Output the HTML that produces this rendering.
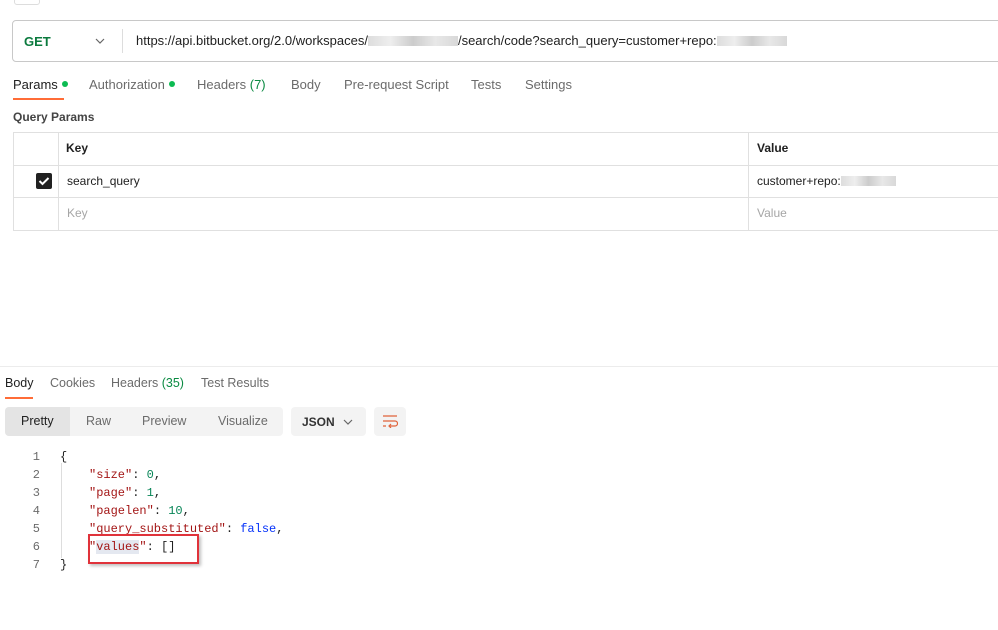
<!DOCTYPE html>
<html><head><style>
body{margin:0;width:998px;height:630px;background:#fff;font-family:"Liberation Sans",sans-serif;font-size:13px;color:#212121;position:relative;overflow:hidden}
.a{position:absolute;white-space:nowrap}
.g{color:#6b6b6b}
.dot{display:inline-block;width:6px;height:6px;border-radius:3px;background:#0cbb52;margin-left:4px;vertical-align:2px}
.mono{font-family:"Liberation Mono",monospace;font-size:12px}
.s{color:#a31515}.n{color:#098658}.b{color:#0431fa}
.ln{color:#6b6b6b;width:20px;text-align:right}
.blur{display:inline-block;width:90px;height:10px;background:linear-gradient(90deg,#ddd,#eee,#ccc,#e8e8e8,#d8d8d8);vertical-align:-1px}
</style></head><body>
<div class="a" style="left:14px;top:-2px;width:24px;height:5px;border:1px solid #ddd;border-radius:3px"></div>
<div class="a" style="left:12px;top:20px;width:990px;height:40px;border:1px solid #c8c8c8;border-radius:4px"></div>
<div class="a" style="left:24px;top:34px;color:#0b7a3e;font-weight:bold;font-size:13px">GET</div>
<svg class="a" style="left:95px;top:37px" width="10" height="8"><path d="M1 2l4 4 4-4" fill="none" stroke="#666" stroke-width="1.2"/></svg>
<div class="a" style="left:122px;top:29px;width:1px;height:24px;background:#ddd"></div>
<div class="a" style="left:136px;top:33px">https://api.bitbucket.org/2.0/workspaces/<span class="blur"></span>/search/code?search_query=customer+repo:<span class="blur" style="width:70px"></span></div>
<div class="a" style="left:13px;top:77px">Params<span class="dot"></span></div>
<div class="a" style="left:13px;top:98px;width:51px;height:2px;background:#ff6c37"></div>
<div class="a g" style="left:89px;top:77px">Authorization<span class="dot"></span></div>
<div class="a g" style="left:197px;top:77px">Headers <span style="color:#0a8a42">(7)</span></div>
<div class="a g" style="left:291px;top:77px">Body</div>
<div class="a g" style="left:344px;top:77px">Pre-request Script</div>
<div class="a g" style="left:471px;top:77px">Tests</div>
<div class="a g" style="left:525px;top:77px">Settings</div>
<div class="a" style="left:13px;top:110px;font-weight:bold;color:#444;font-size:12px">Query Params</div>
<div class="a" style="left:13px;top:132px;width:990px;height:97px;border:1px solid #e0e0e0"></div>
<div class="a" style="left:13px;top:165px;width:990px;height:1px;background:#e0e0e0"></div>
<div class="a" style="left:13px;top:197px;width:990px;height:1px;background:#e0e0e0"></div>
<div class="a" style="left:58px;top:132px;width:1px;height:98px;background:#e0e0e0"></div>
<div class="a" style="left:748px;top:132px;width:1px;height:98px;background:#e0e0e0"></div>
<div class="a" style="left:66px;top:141px;font-weight:bold;font-size:12px">Key</div>
<div class="a" style="left:757px;top:141px;font-weight:bold;font-size:12px">Value</div>
<div class="a" style="left:36px;top:173px;width:16px;height:16px;background:#212121;border-radius:2px"></div>
<svg class="a" style="left:36px;top:173px" width="16" height="16"><path d="M3.5 8l3 3 6-6" fill="none" stroke="#fff" stroke-width="2"/></svg>
<div class="a" style="left:67px;top:174px;font-size:12px">search_query</div>
<div class="a" style="left:757px;top:174px;font-size:12px">customer+repo:<span class="blur" style="width:55px"></span></div>
<div class="a" style="left:67px;top:206px;font-size:12px;color:#a6a6a6">Key</div>
<div class="a" style="left:757px;top:206px;font-size:12px;color:#a6a6a6">Value</div>
<div class="a" style="left:0;top:366px;width:998px;height:1px;background:#ececec"></div>
<div class="a" style="left:5px;top:376px;font-size:12.5px">Body</div>
<div class="a" style="left:5px;top:397px;width:28px;height:2px;background:#ff6c37"></div>
<div class="a g" style="left:50px;top:376px;font-size:12.5px">Cookies</div>
<div class="a g" style="left:111px;top:376px;font-size:12.5px">Headers <span style="color:#0a8a42">(35)</span></div>
<div class="a g" style="left:201px;top:376px;font-size:12.5px">Test Results</div>
<div class="a" style="left:5px;top:407px;width:278px;height:29px;background:#f3f3f3;border-radius:4px"></div>
<div class="a" style="left:5px;top:407px;width:65px;height:29px;background:#e4e4e4;border-radius:4px 0 0 4px"></div>
<div class="a" style="left:21px;top:414px;font-size:12.5px">Pretty</div>
<div class="a g" style="left:86px;top:414px;font-size:12.5px">Raw</div>
<div class="a g" style="left:142px;top:414px;font-size:12.5px">Preview</div>
<div class="a g" style="left:218px;top:414px;font-size:12.5px">Visualize</div>
<div class="a" style="left:291px;top:407px;width:75px;height:29px;background:#f3f3f3;border-radius:4px"></div>
<div class="a" style="left:302px;top:415px;font-size:12px;font-weight:bold;color:#333">JSON</div>
<svg class="a" style="left:343px;top:419px" width="10" height="7"><path d="M1 1l4 4 4-4" fill="none" stroke="#666" stroke-width="1.2"/></svg>
<div class="a" style="left:374px;top:407px;width:32px;height:29px;background:#f3f3f3;border-radius:4px"></div>
<svg class="a" style="left:382px;top:414px" width="16" height="14"><path d="M1 2h14M1 7h12a2.5 2.5 0 0 1 0 5H8M1 12h3M9 10l-2 2 2 2" fill="none" stroke="#e0623a" stroke-width="1.2"/></svg>
<div class="a" style="left:61px;top:463px;width:1px;height:95px;background:#ddd"></div>
<div class="a mono" style="left:20px;top:448px;line-height:18px">
<div><span class="a ln" style="left:0">1</span><span style="margin-left:40px">{</span></div>
<div><span class="a ln">2</span><span style="margin-left:69px"><span class="s">"size"</span>: <span class="n">0</span>,</span></div>
<div><span class="a ln">3</span><span style="margin-left:69px"><span class="s">"page"</span>: <span class="n">1</span>,</span></div>
<div><span class="a ln">4</span><span style="margin-left:69px"><span class="s">"pagelen"</span>: <span class="n">10</span>,</span></div>
<div><span class="a ln">5</span><span style="margin-left:69px"><span class="s">"query_substituted"</span>: <span class="b">false</span>,</span></div>
<div><span class="a ln">6</span><span style="margin-left:69px"><span class="s">"<span style="background:#e4e8f0">values</span>"</span>: []</span></div>
<div><span class="a ln">7</span><span style="margin-left:40px">}</span></div>
</div>
<div class="a" style="left:88px;top:534px;width:107px;height:26px;border:2px solid #e0323a;box-shadow:2px 2px 3px rgba(0,0,0,.25)"></div>
</body></html>
